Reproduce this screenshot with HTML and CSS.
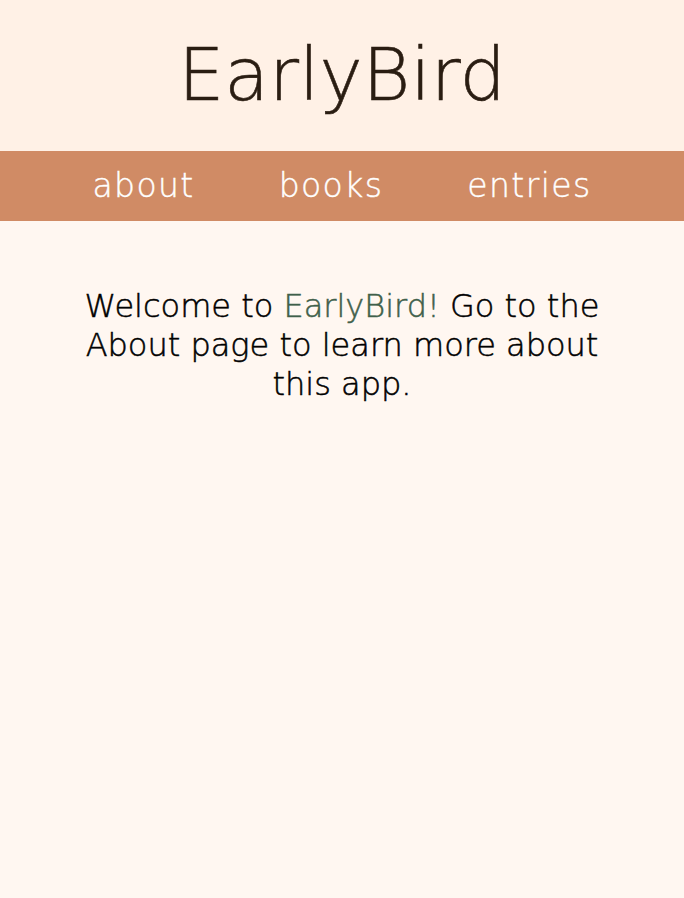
FILE: index.html
```html
<!DOCTYPE html>
<html lang="en">
<head>
<meta charset="utf-8">
<title>EarlyBird</title>
<link rel="stylesheet" href="styles.css">
</head>
<body>
<header class="site-header">
  <h1 class="site-title">EarlyBird</h1>
</header>
<nav class="site-nav">
  <a class="nav-link" href="#">about</a>
  <a class="nav-link" href="#">books</a>
  <a class="nav-link" href="#">entries</a>
</nav>
<main class="content">
  <p class="welcome">Welcome to <span class="brand">EarlyBird!</span> Go to the About page to learn more about this app.</p>
</main>
</body>
</html>
```
FILE: styles.css
```css
html, body {
  margin: 0;
  padding: 0;
}
body {
  background: #fff7f1;
  font-family: "DejaVu Sans", sans-serif;
  min-height: 898px;
}
.site-header {
  background: #fff1e6;
  height: 151px;
  display: flex;
  align-items: center;
  justify-content: center;
}
.site-title {
  margin: 0;
  font-size: 73px;
  font-weight: 200;
  color: #2a1d12;
  padding-bottom: 2px;
  -webkit-text-stroke: 0.6px #2a1d12;
}
.site-nav {
  background: #d08b65;
  height: 70px;
  display: flex;
  align-items: center;
  justify-content: center;
  gap: 84px;
  padding-bottom: 1px;
  box-sizing: border-box;
}
.nav-link {
  color: #fff;
  text-decoration: none;
  font-size: 33px;
  font-weight: 200;
  letter-spacing: 1.4px;
  -webkit-text-stroke: 0.4px #fff;
}
.content {
  display: flex;
  justify-content: center;
  padding-top: 66px;
}
.welcome {
  margin: 0;
  width: 540px;
  text-align: center;
  font-size: 32px;
  line-height: 39px;
  color: #000;
  font-weight: 200;
  -webkit-text-stroke: 0.5px #000;
}
.brand {
  color: #3f5f4a;
  -webkit-text-stroke: 0.5px #3f5f4a;
}
```
